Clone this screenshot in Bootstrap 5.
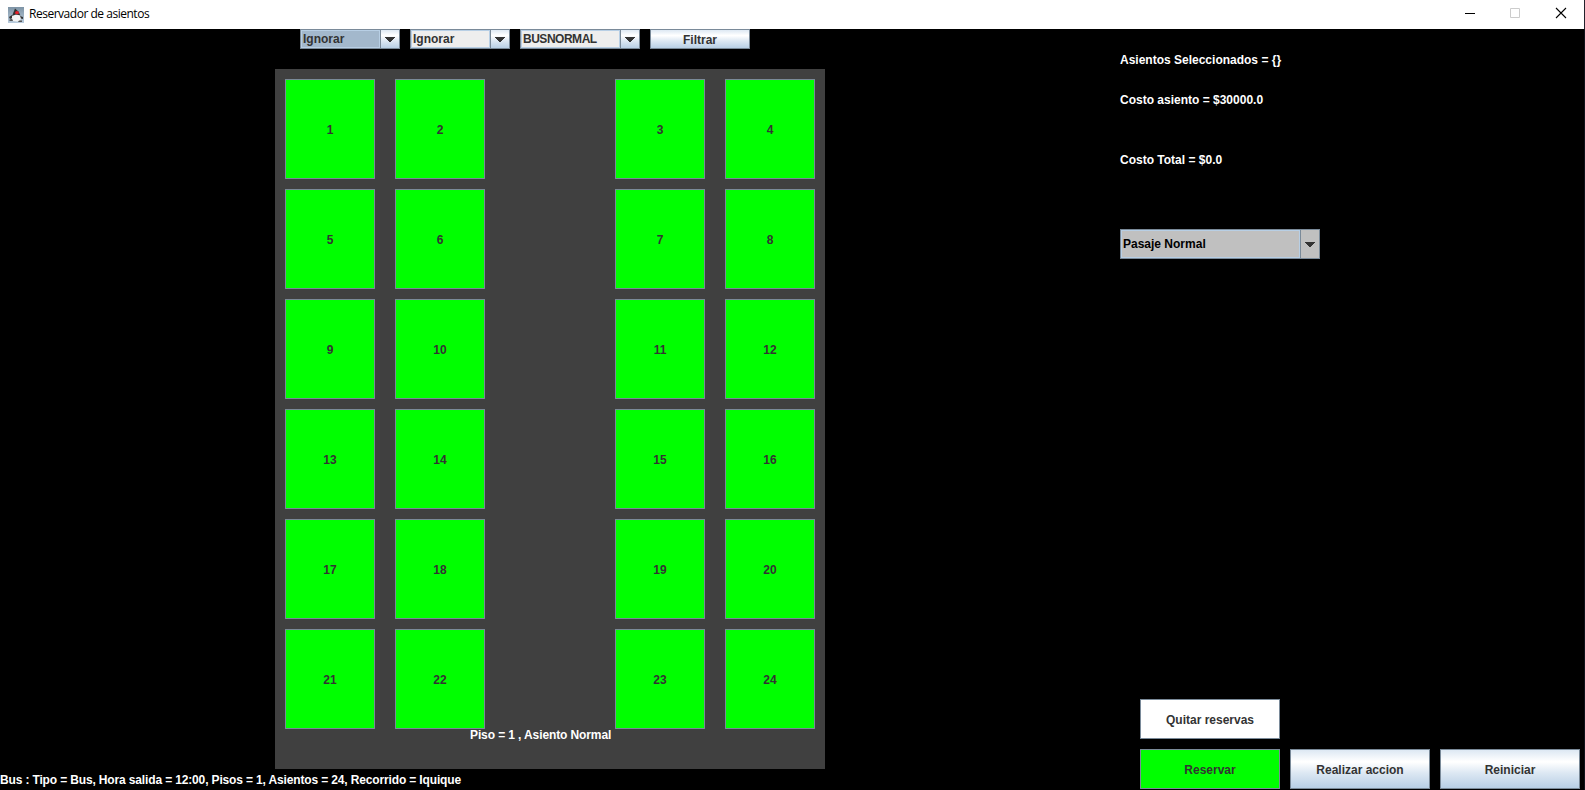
<!DOCTYPE html>
<html lang="es">
<head>
<meta charset="utf-8">
<title>Reservador de asientos</title>
<link href="https://cdn.jsdelivr.net/npm/bootstrap@5.3.0/dist/css/bootstrap.min.css" rel="stylesheet">
<style>
body{font:bold 12px/16px "Liberation Sans",Arial,sans-serif;width:1585px;height:790px;color:#fff;background:#000}
.titlebar{height:29px;background:#fff;color:#000;font:12px "Open Sans","Noto Sans",sans-serif;padding-left:8px;border-right:1px solid #22222c}
.titlebar .caption{letter-spacing:-.48px;margin-left:5px;padding-bottom:2px}
.win-btn{width:45px;height:29px}
.window-body{height:761px;border-right:1px solid #10131a}
.bus-area{width:1100px}
.filters{padding-left:300px;gap:10px;height:40px}
.metal{border:1px solid #7a8a99;border-radius:0;padding:2px 0 0;font:inherit;color:#333;background:linear-gradient(#dde8f3 0,#fff 30%,#fff 32%,#dde8f3 60%,#b8cfe5 100%)}
.metal:hover{color:#333}
.combo{height:20px;width:100px;border:1px solid #7a8a99;color:#333;background:#eee}
.combo .value{border:1px solid #b8cfe5;padding-left:1px}
.combo .arrow{width:19px;border-left:1px solid #7a8a99;background:linear-gradient(#dde8f3 0,#fff 30%,#dde8f3 60%,#b8cfe5 100%)}
.combo.focused .value{background:#a3b8cc}
.combo.wide{width:120px}
.combo.wide .value{letter-spacing:-.48px}
.combo.fare{width:200px;height:30px;background:#c0c0c0;color:#000;margin-top:61px}
.combo.fare .arrow{background:#c0c0c0}
.filters .metal{width:100px;height:20px}
.bus{width:550px;height:700px;background:#404040;margin-left:275px;padding:10px 10px 0}
.seats{display:grid;grid-template-columns:90px 90px 90px 90px;column-gap:20px;row-gap:10px;grid-auto-rows:100px}
.seats .metal:nth-child(4n+3),.seats .metal:nth-child(4n){margin-left:110px;margin-right:-110px}
.metal.free{background:#0f0}
.metal.plain{background:#fff}
.floor{padding-left:185px;line-height:13px;letter-spacing:-.11px}
.status{letter-spacing:-.145px;padding-bottom:2px}
.side{padding:23px 4px 1px 20px}
.total{margin-top:44px}
.actions{padding-left:20px;gap:10px}
.actions .metal{width:140px;height:40px}
</style>
</head>
<body class="overflow-hidden">
<header class="titlebar d-flex align-items-center">
  <svg width="16" height="16" viewBox="0 0 16 16"><defs><linearGradient id="g" x2="0" y2="1"><stop stop-color="#7d93a5"/><stop offset="1" stop-color="#b9cbdc"/></linearGradient></defs><rect width="16" height="16" fill="url(#g)"/><path d="M5.5 6L8 8l3-1 2 3-1 4.500H8.500l-4-.5-1-3z" fill="#f4f4f4"/><path d="M7 1.500L5 6.500 4 9l4-1.500 4.500 1-2-4z" fill="#333"/><ellipse cx="9" cy="5.700" rx="1.900" ry="1.600" fill="#e8202a"/><path d="M1 10l3-2v3l-2 1zM12 9l3 1v2l-2-.5z" fill="#333"/><path d="M1 13l3-1.500L5 14H2zM11 13.500h3V15h-4z" fill="#555"/></svg>
  <span class="caption">Reservador de asientos</span>
  <div class="ms-auto d-flex">
    <svg class="win-btn" viewBox="0 0 45 29" fill="none"><path d="M16 13.500h10" stroke="#000"/></svg>
    <svg class="win-btn" viewBox="0 0 45 29" fill="none"><path d="M16.500 8.500h9v9h-9z" stroke="#ccc"/></svg>
    <svg class="win-btn" viewBox="0 0 45 29" fill="none"><path d="M17 8l10 10M27 8L17 18" stroke="#000" stroke-width="1.100"/></svg>
  </div>
</header>
<main class="window-body d-flex">
  <section class="bus-area d-flex flex-column flex-shrink-0">
    <div class="filters d-flex align-items-start">
      <div class="combo focused d-flex"><span class="value flex-grow-1">Ignorar</span><span class="arrow d-flex align-items-center justify-content-center"><svg width="10" height="5"><path d="M0 0h10v1H9v1H8v1H7v1H6v1H4V4H3V3H2V2H1V1H0z" fill="#333"/></svg></span></div>
      <div class="combo d-flex"><span class="value flex-grow-1">Ignorar</span><span class="arrow d-flex align-items-center justify-content-center"><svg width="10" height="5"><path d="M0 0h10v1H9v1H8v1H7v1H6v1H4V4H3V3H2V2H1V1H0z" fill="#333"/></svg></span></div>
      <div class="combo wide d-flex"><span class="value flex-grow-1">BUSNORMAL</span><span class="arrow d-flex align-items-center justify-content-center"><svg width="10" height="5"><path d="M0 0h10v1H9v1H8v1H7v1H6v1H4V4H3V3H2V2H1V1H0z" fill="#333"/></svg></span></div>
      <button class="btn metal">Filtrar</button>
    </div>
    <div class="bus">
      <div class="seats">
        <button class="btn metal free">1</button><button class="btn metal free">2</button><button class="btn metal free">3</button><button class="btn metal free">4</button>
        <button class="btn metal free">5</button><button class="btn metal free">6</button><button class="btn metal free">7</button><button class="btn metal free">8</button>
        <button class="btn metal free">9</button><button class="btn metal free">10</button><button class="btn metal free">11</button><button class="btn metal free">12</button>
        <button class="btn metal free">13</button><button class="btn metal free">14</button><button class="btn metal free">15</button><button class="btn metal free">16</button>
        <button class="btn metal free">17</button><button class="btn metal free">18</button><button class="btn metal free">19</button><button class="btn metal free">20</button>
        <button class="btn metal free">21</button><button class="btn metal free">22</button><button class="btn metal free">23</button><button class="btn metal free">24</button>
      </div>
      <div class="floor">Piso = 1 , Asiento Normal</div>
    </div>
    <div class="status mt-auto">Bus : Tipo = Bus, Hora salida = 12:00, Pisos = 1, Asientos = 24, Recorrido = Iquique</div>
  </section>
  <aside class="side d-flex flex-column flex-grow-1">
    <div>Asientos Seleccionados = {}</div>
    <div class="mt-4">Costo asiento = $30000.0</div>
    <div class="total">Costo Total = $0.0</div>
    <div class="combo fare d-flex"><span class="value flex-grow-1 d-flex align-items-center">Pasaje Normal</span><span class="arrow d-flex align-items-center justify-content-center"><svg width="10" height="5"><path d="M0 0h10v1H9v1H8v1H7v1H6v1H4V4H3V3H2V2H1V1H0z" fill="#333"/></svg></span></div>
    <div class="actions d-flex flex-column mt-auto">
      <button class="btn metal plain">Quitar reservas</button>
      <div class="d-flex justify-content-between"><button class="btn metal free">Reservar</button><button class="btn metal">Realizar accion</button><button class="btn metal">Reiniciar</button></div>
    </div>
  </aside>
</main>
<script src="https://cdn.jsdelivr.net/npm/bootstrap@5.3.0/dist/js/bootstrap.bundle.min.js"></script>
</body>
</html>
